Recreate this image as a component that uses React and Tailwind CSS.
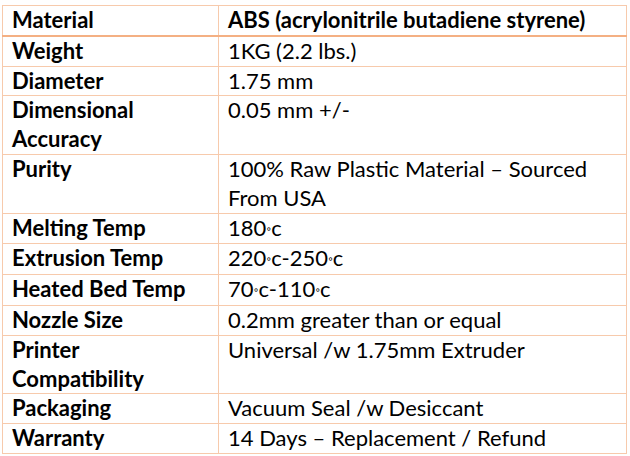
const rows = [
  ["Weight", "1KG (2.2 lbs.)"],
  ["Diameter", "1.75 mm"],
  ["Dimensional Accuracy", "0.05 mm +/-"],
  ["Purity", "100% Raw Plastic Material – Sourced From USA"],
  ["Melting Temp", <>180<Deg />c</>],
  ["Extrusion Temp", <>220<Deg />c-250<Deg />c</>],
  ["Heated Bed Temp", <>70<Deg />c-110<Deg />c</>],
  ["Nozzle Size", "0.2mm greater than or equal"],
  ["Printer Compatibility", "Universal /w 1.75mm Extruder"],
  ["Packaging", "Vacuum Seal /w Desiccant"],
  ["Warranty", "14 Days – Replacement / Refund"],
];

function Deg() {
  return <span className="text-[12px] align-[3px]">◦</span>;
}

export default function App() {
  return (
    <div className="w-[630px] h-[456px] bg-white pt-[5px] pl-[2px]" style={{ fontFamily: "Lato, 'Open Sans', sans-serif" }}>
      <table className="w-[625px] border-collapse table-fixed text-[22px] leading-[28.8px] text-black">
        <colgroup>
          <col className="w-[216px]" />
          <col />
        </colgroup>
        <thead>
          <tr>
            <th className="border border-[#f7caac] border-b-2 border-b-[#f4b083] text-left font-bold px-[9px] h-[28px]">Material</th>
            <th className="border border-[#f7caac] border-b-2 border-b-[#f4b083] text-left font-bold px-[9px]">ABS (acrylonitrile butadiene styrene)</th>
          </tr>
        </thead>
        <tbody>
          {rows.map(([k, v], i) => (
            <tr key={i}>
              <td className="border border-[#f7caac] align-top font-bold pl-[9px] pr-[20px]">{k}</td>
              <td className="border border-[#f7caac] align-top pl-[9px] pr-[20px]">{v}</td>
            </tr>
          ))}
        </tbody>
      </table>
    </div>
  );
}
